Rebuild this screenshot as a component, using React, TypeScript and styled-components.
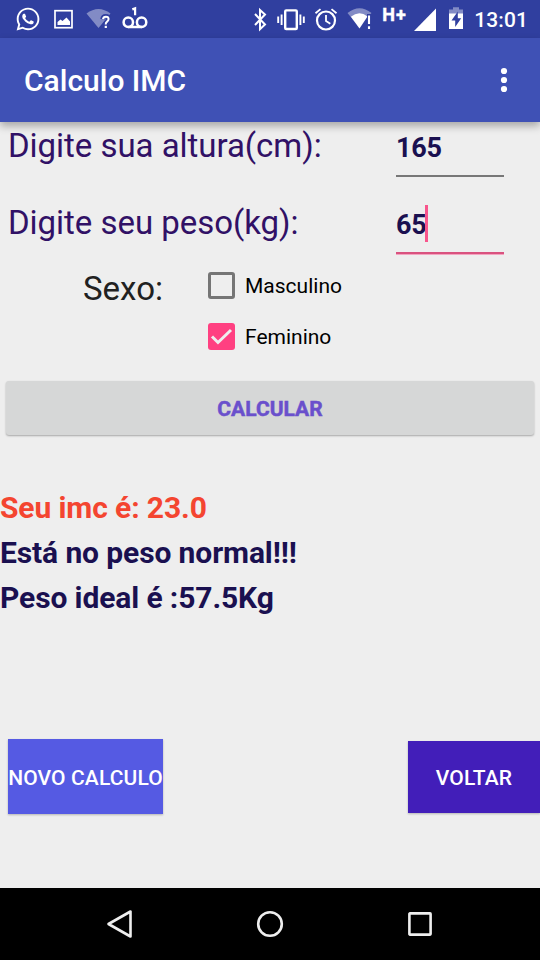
import React, { useState } from "react";
import styled, { createGlobalStyle } from "styled-components";
import { FaWhatsapp } from "react-icons/fa";

const GlobalStyle = createGlobalStyle`
  * {
    box-sizing: border-box;
  }
  body {
    margin: 0;
    background: #eeeeee;
    font-family: Roboto, "Liberation Sans", sans-serif;
  }
  button,
  input {
    font-family: inherit;
    border: 0;
    padding: 0;
    border-radius: 0;
  }
`;

const StatusIcons: React.FC = () => (
  <StatusBar>
    <StatusGroup>
      <Whatsapp size={26} />
      <StatusIcon width={19} height={38} $left={14}>
        <rect x="1" y="10.700" width="17" height="17" fill="none" stroke="#fff" strokeWidth="1.700" />
        <path d="M3.500 25v-3l3-2.500 2 1.500 4-3.500 3.500 4v3.500z" fill="#fff" />
      </StatusIcon>
      <StatusIcon width={26} height={38} $left={13}>
        <path d="M0.500 13.500Q12.500 4.500 24.500 13.500L12.500 28z" fill="#fff" opacity="0.4" />
        <path d="M16.500 19.200q.4-2.900 3.200-2.900 3.100 0 3.100 2.700 0 1.600-1.700 2.700-1.400 1-1.400 2.500" fill="none" stroke="#303f9f" strokeWidth="4.500" />
        <path d="M17 19.200q.3-2.500 2.900-2.500 2.700 0 2.700 2.400 0 1.400-1.500 2.500-1.400 1-1.400 2.800" fill="none" stroke="#fff" strokeWidth="2" />
        <rect x="18.700" y="25.800" width="2.200" height="2.200" fill="#fff" />
      </StatusIcon>
      <StatusIcon width={26} height={38} $left={10}>
        <circle cx="6.300" cy="22.300" r="4.700" fill="none" stroke="#fff" strokeWidth="2.500" />
        <circle cx="19.600" cy="22.300" r="4.700" fill="none" stroke="#fff" strokeWidth="2.500" />
        <path d="M6.300 27h13.500" stroke="#fff" strokeWidth="2.500" />
        <path d="M10.300 9.400l2.800-1v6.800" fill="none" stroke="#fff" strokeWidth="2.200" />
      </StatusIcon>
    </StatusGroup>
    <StatusGroup>
      <StatusIcon width={15} height={38}>
        <path d="M2 14l10 10.500-5 4.700V10l5 4.500L2 25" fill="none" stroke="#fff" strokeWidth="2" />
      </StatusIcon>
      <StatusIcon width={28} height={38} $left={9}>
        <rect x="8.200" y="10.400" width="11.600" height="18.600" rx="1" fill="none" stroke="#fff" strokeWidth="2.400" />
        <path d="M1.200 16.500v6.500M4.600 14.500v10.500M23.400 14.500v10.500M26.800 16.500v6.500" stroke="#fff" strokeWidth="1.900" />
      </StatusIcon>
      <StatusIcon width={24} height={38} $left={9}>
        <circle cx="12" cy="20.500" r="9" fill="none" stroke="#fff" strokeWidth="2.200" />
        <path d="M12 15v6l4.300 2.800M1.500 13.300l5-4.200M22.500 13.300l-5-4.200" fill="none" stroke="#fff" strokeWidth="1.800" />
      </StatusIcon>
      <StatusIcon width={25} height={38} $left={9}>
        <path d="M0.500 13Q12.500 3.500 24.500 13l-4 4.200H4z" fill="#fff" opacity="0.4" />
        <path d="M3.800 16.700Q12.300 9.800 20.500 16.500L12.500 28.500z" fill="#fff" />
        <path d="M22 14v15" stroke="#303f9f" strokeWidth="4" />
        <path d="M22 15.500v8.500M22 26.200v2.800" stroke="#fff" strokeWidth="2.100" />
      </StatusIcon>
      <Network>H+</Network>
      <StatusIcon width={22} height={38} $left={6}>
        <path d="M22 8.500V31H0z" fill="#fff" />
      </StatusIcon>
      <StatusIcon width={14} height={38} $left={13}>
        <path d="M0 14V9.500h4V7.300h6v2.200h4V14z" fill="#fff" opacity="0.4" />
        <path d="M0 13.500h14V29H0z" fill="#fff" />
        <path d="M8.800 11.500L2.500 20.500h3.700v6.500l6-8.700H8.800z" fill="#303f9f" />
      </StatusIcon>
      <Clock>13:01</Clock>
    </StatusGroup>
  </StatusBar>
);

const App: React.FC = () => {
  const [altura, setAltura] = useState("165");
  const [sexo, setSexo] = useState("Feminino");

  return (
    <Screen>
      <GlobalStyle />
      <StatusIcons />
      <Toolbar>
        <Title>Calculo IMC</Title>
        <MenuIcon width={8} height={26}>
          <circle cx="4" cy="4" r="3.100" />
          <circle cx="4" cy="13" r="3.100" />
          <circle cx="4" cy="22" r="3.100" />
        </MenuIcon>
      </Toolbar>

      <Content>
        <Field>
          <Label>Digite sua altura(cm):</Label>
          <Input value={altura} onChange={(e) => setAltura(e.target.value)} />
        </Field>
        <Field>
          <Label>Digite seu peso(kg):</Label>
          <FocusedInput>
            65
            <Caret />
          </FocusedInput>
        </Field>

        <Gender>
          <GenderLabel>Sexo:</GenderLabel>
          <Options>
            {["Masculino", "Feminino"].map((item) => (
              <Option key={item} onClick={() => setSexo(item)}>
                <Box $checked={sexo === item}>
                  {sexo === item && (
                    <svg width="27" height="27" viewBox="0 0 27 27">
                      <path d="M4 13.500l6 6L23 7" fill="none" stroke="#eee" strokeWidth="3" />
                    </svg>
                  )}
                </Box>
                {item}
              </Option>
            ))}
          </Options>
        </Gender>

        <Calculate>CALCULAR</Calculate>

        <Results>
          <Result $color="#f44530">Seu imc é: 23.0</Result>
          <Result>Está no peso normal!!!</Result>
          <Result>Peso ideal é :57.5Kg</Result>
        </Results>

        <Actions>
          <Action $width={155} $height={75} $color="#555ae3">
            NOVO CALCULO
          </Action>
          <Action $width={132} $height={72} $color="#421eb9">
            VOLTAR
          </Action>
        </Actions>
      </Content>

      <NavBar>
        <svg width="30" height="30" viewBox="0 0 30 30">
          <path d="M3.500 15L25.500 2.500v25z" />
        </svg>
        <svg width="30" height="30" viewBox="0 0 30 30">
          <circle cx="15" cy="15" r="11.800" />
        </svg>
        <svg width="30" height="30" viewBox="0 0 30 30">
          <rect x="4.400" y="4.400" width="21.200" height="21.200" rx="0.500" />
        </svg>
      </NavBar>
    </Screen>
  );
};

export default App;

// Styled Components

const Screen = styled.div`
  display: flex;
  flex-direction: column;
  width: 540px;
  height: 960px;
  overflow: hidden;
  background: #eeeeee;
`;

const StatusBar = styled.div`
  display: flex;
  justify-content: space-between;
  height: 38px;
  padding: 0 12px 0 16px;
  background: #303f9f;
  color: #fff;
`;

const StatusGroup = styled.div`
  display: flex;
`;

const StatusIcon = styled.svg<{ $left?: number }>`
  flex: none;
  margin-left: ${({ $left }) => $left || 0}px;
`;

const Whatsapp = styled(FaWhatsapp)`
  margin: 6px -1px 0;
`;

const Network = styled.span`
  width: 26px;
  margin-left: 10px;
  padding-top: 5px;
  font-size: 18px;
  line-height: 20px;
  font-weight: 700;
  letter-spacing: 1px;
  white-space: nowrap;
  -webkit-text-stroke: 0.4px #fff;
`;

const Clock = styled.span`
  margin-left: 11px;
  font-size: 21px;
  line-height: 40px;
  font-weight: 500;
  letter-spacing: 0.1px;
`;

const Toolbar = styled.header`
  display: flex;
  align-items: center;
  justify-content: space-between;
  flex: none;
  height: 84px;
  padding: 0 32px 0 24px;
  background: #3f51b5;
  box-shadow: 0 4px 8px rgba(0, 0, 0, 0.3);
`;

const Title = styled.h1`
  margin: 0;
  color: #fff;
  font-size: 30px;
  font-weight: 500;
`;

const MenuIcon = styled.svg`
  fill: #fff;
`;

const Content = styled.main`
  display: flex;
  flex-direction: column;
  height: 766px;
`;

const Field = styled.div`
  display: flex;
  justify-content: space-between;
  height: 77px;
  padding: 0 36px 0 8px;
`;

const Label = styled.label`
  color: #311166;
  font-size: 33px;
  line-height: 47px;
  letter-spacing: -0.04px;
`;

const Input = styled.input`
  width: 108px;
  height: 55px;
  padding-bottom: 2px;
  border-bottom: 2px solid #777;
  background: transparent;
  color: #1a1050;
  font-size: 27px;
  font-weight: 700;
  letter-spacing: -0.2px;
  outline: 0;
`;

const FocusedInput = styled.div`
  display: flex;
  width: 108px;
  height: 55px;
  border-bottom: 2px solid #d9527f;
  box-shadow: 0 1px 0 #f3a5c0;
  color: #1a1050;
  font-size: 27px;
  line-height: 52px;
  font-weight: 700;
  letter-spacing: -0.2px;
`;

const Caret = styled.span`
  width: 3px;
  height: 37px;
  margin: 6px 0 0 -2px;
  background: #f8558c;
`;

const Gender = styled.div`
  display: flex;
  height: 105px;
  padding-left: 83px;
`;

const GenderLabel = styled.span`
  width: 124px;
  color: #212121;
  font-size: 33px;
  line-height: 26px;
`;

const Options = styled.div`
  display: flex;
  flex-direction: column;
  gap: 24px;
  margin-top: -4px;
`;

const Option = styled.div`
  display: flex;
  align-items: center;
  height: 27px;
  font-size: 21px;
  color: #000;
`;

const Box = styled.span<{ $checked: boolean }>`
  display: flex;
  width: 27px;
  height: 27px;
  margin: -1px 10.5px 0 0.5px;
  border: ${({ $checked }) => ($checked ? "0" : "3px solid #757575")};
  border-radius: 3px;
  background: ${({ $checked }) => ($checked ? "#ff4081" : "transparent")};
`;

const Calculate = styled.button`
  flex: none;
  height: 54px;
  margin: 0 6px;
  padding-top: 2px;
  border-radius: 3px;
  background: #d6d7d7;
  box-shadow: 0 1px 2px rgba(0, 0, 0, 0.3);
  color: #6a50cc;
  font-size: 21px;
  font-weight: 700;
  -webkit-text-stroke: 0.5px #6a50cc;
`;

const Results = styled.div`
  margin-top: 50px;
`;

const Result = styled.p<{ $color?: string }>`
  margin: 0;
  color: ${({ $color }) => $color || "#1a1050"};
  font-size: 30px;
  line-height: 45px;
  font-weight: 700;
  letter-spacing: -0.11px;
`;

const Actions = styled.div`
  display: flex;
  align-items: center;
  justify-content: space-between;
  margin-top: 119px;
  padding-left: 8px;
`;

const Action = styled.button<{ $width: number; $height: number; $color: string }>`
  width: ${({ $width }) => $width}px;
  height: ${({ $height }) => $height}px;
  padding-top: 2px;
  background: ${({ $color }) => $color};
  box-shadow: 0 1px 2px rgba(0, 0, 0, 0.25);
  color: #fff;
  font-size: 21px;
  font-weight: 500;
  letter-spacing: 0.12px;
  white-space: nowrap;
`;

const NavBar = styled.nav`
  display: flex;
  align-items: center;
  justify-content: space-between;
  height: 72px;
  padding: 0 105px;
  background: #000;

  svg {
    fill: none;
    stroke: #eee;
    stroke-width: 2.6;
    stroke-linejoin: round;
  }
`;
